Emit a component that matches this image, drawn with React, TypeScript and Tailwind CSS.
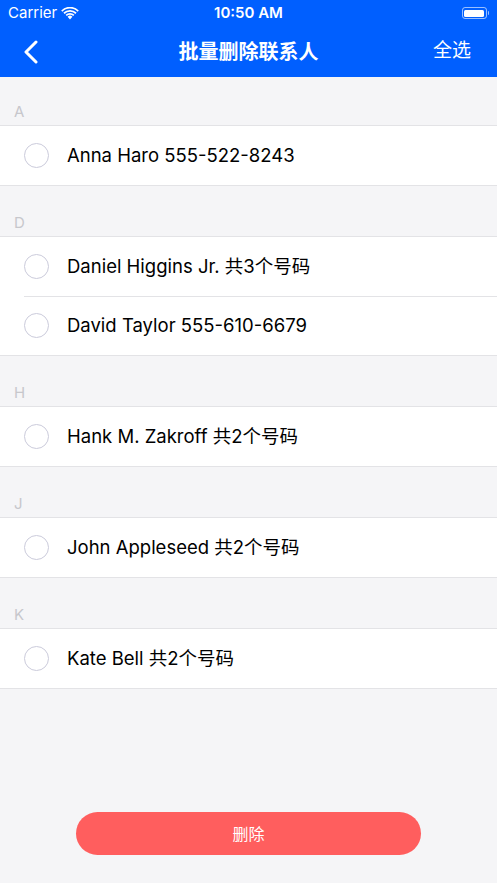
const sections = [
  { letter: 'A', items: ['Anna Haro 555-522-8243'] },
  { letter: 'D', items: ['Daniel Higgins Jr. 共3个号码', 'David Taylor 555-610-6679'] },
  { letter: 'H', items: ['Hank M. Zakroff 共2个号码'] },
  { letter: 'J', items: ['John Appleseed 共2个号码'] },
  { letter: 'K', items: ['Kate Bell 共2个号码'] },
]

const font = { fontFamily: 'Inter, "Noto Sans CJK SC", sans-serif' }

export default function App() {
  return (
    <div className="w-[497px] h-[883px] bg-[#f5f5f7] flex flex-col overflow-hidden" style={font}>
      {/* STATUS + NAV */}
      <div className="bg-[#005fff] text-white">
        <div className="h-[26px] flex items-center justify-between px-2 relative">
          <div className="flex items-center gap-1 text-[15px]">
            <span>Carrier</span>
            <svg width="18" height="13" viewBox="0 0 18 13" fill="white">
              <path d="M9 12.5 L6.6 9.8 A3.4 3.4 0 0 1 11.4 9.8 Z" />
              <path d="M4.6 7.8 A6.3 6.3 0 0 1 13.4 7.8 L12.2 9.1 A4.6 4.6 0 0 0 5.8 9.1 Z" />
              <path d="M2.4 5.6 A9.4 9.4 0 0 1 15.6 5.6 L14.4 6.9 A7.7 7.7 0 0 0 3.6 6.9 Z" />
              <path d="M0.2 3.4 A12.5 12.5 0 0 1 17.8 3.4 L16.6 4.7 A10.8 10.8 0 0 0 1.4 4.7 Z" />
            </svg>
          </div>
          <span className="absolute left-1/2 -translate-x-1/2 text-[15px] font-semibold">10:50 AM</span>
          <div className="flex items-center">
            <div className="w-[25px] h-[12px] rounded-[3px] border border-white/60 p-[1.5px]">
              <div className="w-full h-full bg-white rounded-[1.5px]" />
            </div>
            <div className="w-[1.5px] h-[4px] bg-white/60 rounded-r-sm ml-[1px]" />
          </div>
        </div>
        <div className="h-[51px] flex items-center justify-between pl-6 pr-[26px] relative">
          <svg width="14" height="24" viewBox="0 0 14 24" fill="none" stroke="white" strokeWidth="3" strokeLinecap="round" strokeLinejoin="round">
            <path d="M12 2 L2 12 L12 22" />
          </svg>
          <span className="absolute left-1/2 -translate-x-1/2 text-[20px] font-semibold">批量删除联系人</span>
          <span className="text-[19px]">全选</span>
        </div>
      </div>

      {/* LIST */}
      <div className="flex flex-col">
        {sections.map((s, si) => (
          <div key={s.letter}>
            <div className={`${si === 0 ? 'h-[48px]' : 'h-[50px]'} flex items-end pb-[2px] px-[14px] text-[15px] text-[#c7c7cc]`}>{s.letter}</div>
            <div className="bg-white border-y border-[#e3e3e6]">
              {s.items.map((item, i) => (
                <div key={item} className="flex items-center h-[59px] pl-6 relative">
                  {i > 0 && <div className="absolute top-0 left-6 right-0 h-px bg-[#e3e3e6]" />}
                  <div className="w-[25px] h-[25px] rounded-full border border-[#cbcbdb]" />
                  <span className="ml-[18px] text-[18.5px] text-black">{item}</span>
                </div>
              ))}
            </div>
          </div>
        ))}
      </div>

      {/* DELETE */}
      <div className="mt-auto mb-[28px] flex justify-center">
        <button className="w-[345px] h-[43px] rounded-full bg-[#ff5e5e] text-white text-[16px]">删除</button>
      </div>
    </div>
  )
}
